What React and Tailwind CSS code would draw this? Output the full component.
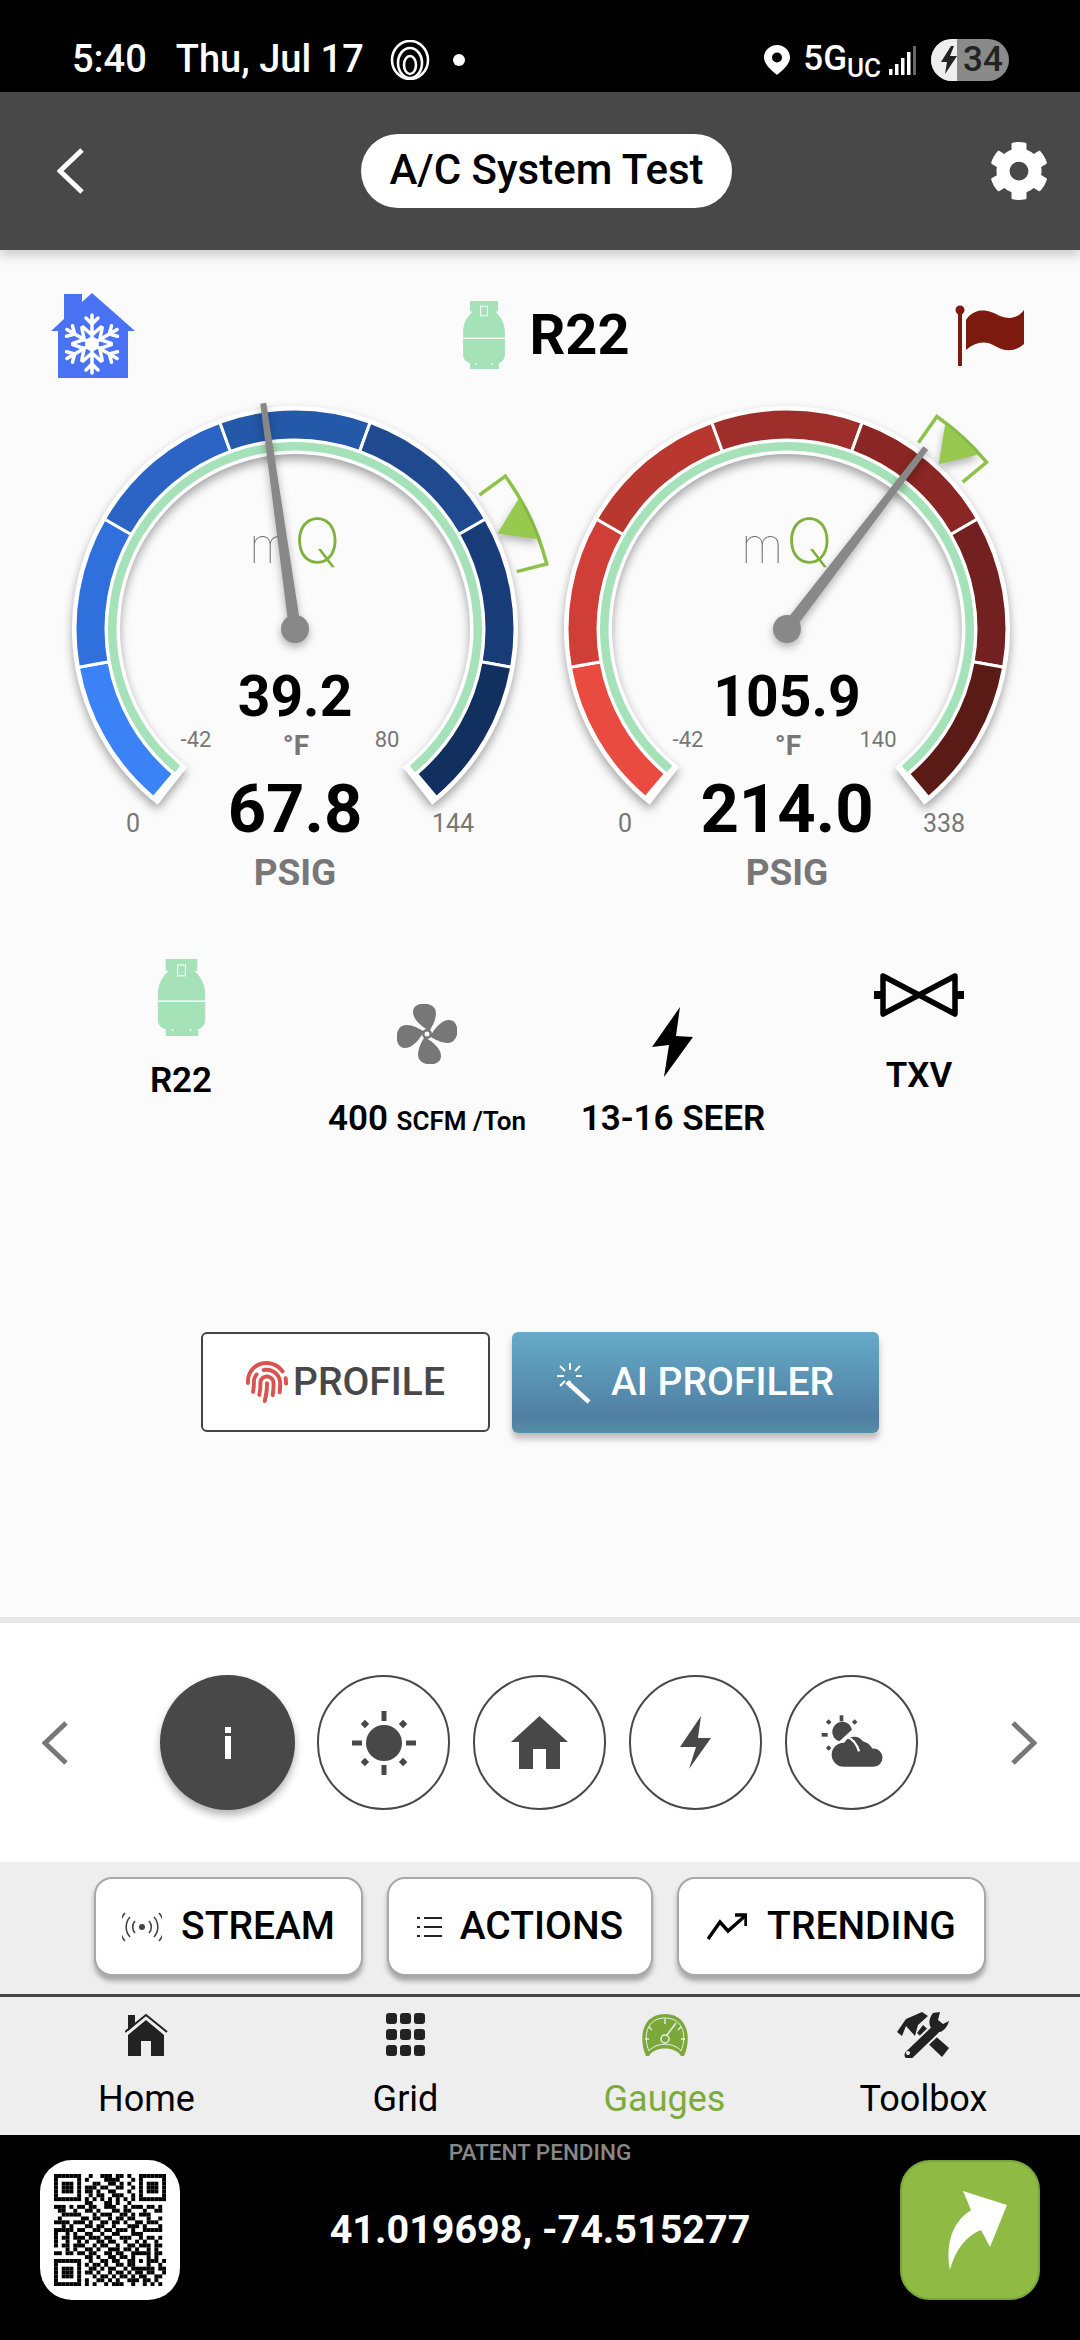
import { FaCog, FaFingerprint } from "react-icons/fa";

const polar = (r, deg) => {
  const a = (deg * Math.PI) / 180;
  return [r * Math.sin(a), -r * Math.cos(a)];
};

const ring = (r1, r2, a1, a2) => {
  const [x1, y1] = polar(r2, a1);
  const [x2, y2] = polar(r2, a2);
  const [x3, y3] = polar(r1, a2);
  const [x4, y4] = polar(r1, a1);
  const big = a2 - a1 > 180 ? 1 : 0;
  return `M${x1} ${y1}A${r2} ${r2} 0 ${big} 1 ${x2} ${y2}L${x3} ${y3}A${r1} ${r1} 0 ${big} 0 ${x4} ${y4}Z`;
};

function Gauge({ colors, needle, marker, temp, tempMax, pressure, pressureMax, labels }) {
  const [tx, ty] = polar(228, needle);
  const [nx, ny] = polar(1, needle + 90);
  const needlePts = `${nx * 6} ${ny * 6} ${tx + nx * 3} ${ty + ny * 3} ${tx - nx * 3} ${ty - ny * 3} ${-nx * 6} ${-ny * 6}`;
  const [m0, m1] = marker;
  const mid = (m0 + m1) / 2;
  const b1 = polar(228, m0);
  const b2 = polar(260, m0);
  const b3 = polar(260, m1);
  const b4 = polar(229, m1);
  const s0 = polar(224, mid);
  const s1 = polar(259, mid - 5);
  const s2 = polar(259, mid + 5);

  return (
    <svg width="492" height="520" viewBox="-246 -249 492 520" className="overflow-visible shrink-0">
      <g className="drop-shadow-[0_5px_5px_rgba(0,0,0,0.35)]">
        <path d={ring(175, 223, -142, 142)} fill="#fff" />
      </g>
      {colors.map((c, i) => (
        <path key={c} d={ring(189, 220, -140 + i * 40, -100 + i * 40)} fill={c} stroke="#fff" strokeWidth="3" />
      ))}
      <path d={ring(178.5, 187, -140, 140)} fill="#a5e2b9" />

      <text x="-46" y="-66" fontSize="49" fontWeight="100" fill="#777" className="font-['Inter']">m</text>
      <text x="-1" y="-66" fontSize="62" fontWeight="200" fill="#7fb23c" className="font-['Inter']">Q</text>

      <path d={`M${b1[0]} ${b1[1]}L${b2[0]} ${b2[1]}A260 260 0 0 1 ${b3[0]} ${b3[1]}L${b4[0]} ${b4[1]}`} fill="none" stroke="#8fc24a" strokeWidth="3.5" />
      <g className="drop-shadow-[0_4px_4px_rgba(0,0,0,0.3)]">
        <path d={`M${s0[0]} ${s0[1]}L${s1[0]} ${s1[1]}A259 259 0 0 1 ${s2[0]} ${s2[1]}Z`} fill="#97c94f" />
      </g>

      <g className="drop-shadow-[0_4px_4px_rgba(0,0,0,0.3)]">
        <polygon points={needlePts} fill="#888" />
        <circle r="14" fill="#888" />
      </g>

      <text x="0" y="87" textAnchor="middle" className="text-[57px] font-bold fill-black">{temp}</text>
      <text x="1" y="126" textAnchor="middle" className="text-[28px] font-bold fill-[#777]">°F</text>
      <text x="-99" y="118" textAnchor="middle" className="text-[22px] fill-[#777]">-42</text>
      <text x={labels[0]} y="118" textAnchor="middle" className="text-[22px] fill-[#777]">{tempMax}</text>
      <text x="0" y="203" textAnchor="middle" className="text-[67px] font-bold fill-black">{pressure}</text>
      <text x="-162" y="203" textAnchor="middle" className="text-[25px] fill-[#777]">0</text>
      <text x={labels[1]} y="203" textAnchor="middle" className="text-[25px] fill-[#777]">{pressureMax}</text>
      <text x="0" y="256" textAnchor="middle" className="text-[37px] font-bold fill-[#777]">PSIG</text>
    </svg>
  );
}

function Cylinder({ width, height }) {
  return (
    <svg width={width} height={height} viewBox="0 0 48 78">
      <path
        d="M8 0H40V12H37C42 17 48 24 48 36V62C48 66 45 70 41 71V78H8V71C3 70 0 66 0 62V36C0 24 6 17 11 12H8Z"
        fill="#a5e2b7"
      />
      <rect x="0" y="42" width="48" height="1.5" fill="#fbfbfb" />
      <rect x="20" y="6" width="8" height="11" fill="none" stroke="#fbfbfb" strokeWidth="1.2" />
      <circle cx="15" cy="72" r="1" fill="#fbfbfb" />
      <circle cx="33" cy="72" r="1" fill="#fbfbfb" />
    </svg>
  );
}

function SnowHouse() {
  return (
    <svg width="86" height="88" viewBox="50 290 86 88">
      <path d="M64 293H82V301L92 292L135 330H128V377H58V330H51L64 318Z" fill="#4a72f5" />
      <g transform="translate(92 343)" stroke="#fff" strokeWidth="3.5" strokeLinecap="round" fill="none">
        {[0, 60, 120, 180, 240, 300].map((a) => (
          <g key={a} transform={`rotate(${a})`}>
            <path d="M0 0V-29M-6 -26L0 -20L6 -26M-9 -17L0 -9L9 -17" />
          </g>
        ))}
        <circle r="7" fill="#fff" stroke="none" />
      </g>
    </svg>
  );
}

function Flag() {
  return (
    <svg width="70" height="62" viewBox="955 304 70 62">
      <rect x="958" y="308" width="4" height="58" fill="#7d1a10" />
      <circle cx="960" cy="310" r="4.5" fill="#7d1a10" />
      <path d="M966 320C975 306 990 310 1000 316C1010 320 1018 318 1024 310V344C1015 352 1005 352 995 346C985 340 975 342 966 350Z" fill="#7d1a10" />
    </svg>
  );
}

function Fan() {
  return (
    <svg width="60" height="60" viewBox="-30 -30 60 60">
      {[0, 90, 180, 270].map((a) => (
        <path key={a} transform={`rotate(${a})`} d="M1 -4C-8 -9 -17 -18 -13 -26C-9 -32 4 -32 8 -25C11 -18 6 -9 3 -4Z" fill="#777" />
      ))}
      <circle r="5" fill="#777" />
      <circle r="2.5" fill="#fbfbfb" />
    </svg>
  );
}

function Txv() {
  return (
    <svg width="90" height="46" viewBox="875 972 90 46">
      <path d="M884 976L956 1014V976L884 1014Z" fill="none" stroke="#000" strokeWidth="5.5" strokeLinejoin="round" />
      <rect x="875" y="991" width="9" height="8" fill="#000" />
      <rect x="956" y="991" width="9" height="8" fill="#000" />
    </svg>
  );
}

const QR_ROWS = [
  "11111110010011101101001111111",
  "10000010100001111000101000001",
  "10111010001100110101001011101",
  "10111010111011001100101011101",
  "10111010110100110001001011101",
  "10000010010110011100101000001",
  "11111110101010101010101111111",
  "00000000110001101001000000000",
  "11101011011001110010111011010",
  "01100100110100011011000100110",
  "00111110001011100110101110000",
  "01000001101100101101100010010",
  "11110111010011011010011011100",
  "00101000110110010001110100010",
  "11111011001101101110100111110",
  "10010100110010011000111000000",
  "10110111011101100111001011010",
  "10010010100110110010010100100",
  "10110111001011001001101110110",
  "00010100110100111011010010100",
  "11011011011001101100111110110",
  "00000000110100110110100010100",
  "11111110010011011001101011101",
  "10000010101101001101100010010",
  "10111010011010110010111111011",
  "10111010110100101101011011001",
  "10111010001011010110101100110",
  "10000010100110101001110110100",
  "11111110101001011100100101010",
];

function QrCode() {
  return (
    <svg width="112" height="112" viewBox="0 0 29 29">
      {QR_ROWS.map((row, y) =>
        row.split("").map((c, x) => (c === "1" ? <rect key={`${x}-${y}`} x={x} y={y} width="1.02" height="1.02" fill="#000" /> : null))
      )}
    </svg>
  );
}

function Chevron({ dir, color, w, h, sw }) {
  const d = dir === "left" ? `M${w - 2} 2L3 ${h / 2}L${w - 2} ${h - 2}` : `M2 2L${w - 3} ${h / 2}L2 ${h - 2}`;
  return (
    <svg width={w} height={h} viewBox={`0 0 ${w} ${h}`} className="shrink-0">
      <path d={d} fill="none" stroke={color} strokeWidth={sw} />
    </svg>
  );
}

function NavItem({ label, active, children }) {
  return (
    <div className="flex-1 flex flex-col items-center">
      <div className="h-[47px] flex items-center justify-center">{children}</div>
      <span className={`text-[36px] leading-[44px] mt-[19px] ${active ? "text-[#7cab3c]" : "text-black"}`}>{label}</span>
    </div>
  );
}

function Chip({ width, children }) {
  return (
    <div
      className="h-[99px] bg-white rounded-[18px] border-2 border-[#a8a8a8] shadow-[0_5px_5px_rgba(0,0,0,0.3)] flex items-center justify-center text-[39px] font-medium text-black"
      style={{ width }}
    >
      {children}
    </div>
  );
}

export default function App() {
  return (
    <div className="w-[1080px] h-[2340px] overflow-hidden bg-[#fbfbfb] font-['Roboto',sans-serif]">
      {/* status bar */}
      <div className="h-[92px] bg-black flex items-center justify-between pl-[72px] pr-[71px] pt-[27px] text-white">
        <div className="flex items-center text-[38px] font-medium">
          <span>5:40</span>
          <span className="ml-[29px]">Thu, Jul 17</span>
          <svg width="40" height="40" viewBox="0 0 40 40" className="ml-[26px]" fill="none" stroke="#fff" strokeWidth="2.6">
            <ellipse cx="20" cy="20" rx="18" ry="19" />
            <ellipse cx="20" cy="23" rx="12" ry="15" />
            <ellipse cx="20" cy="25" rx="6" ry="9" />
          </svg>
          <span className="w-[12px] h-[12px] rounded-full bg-white ml-[23px]" />
        </div>
        <div className="flex items-center">
          <svg width="26" height="30" viewBox="0 0 26 30">
            <path d="M13 0C5.8 0 0 5.6 0 12.6C0 21 13 30 13 30S26 21 26 12.6C26 5.6 20.2 0 13 0ZM13 17.5A5 5 0 1 1 13 7.5A5 5 0 0 1 13 17.5Z" fill="#fff" />
          </svg>
          <span className="text-[35px] font-medium ml-[13px]">5G</span>
          <span className="text-[26px] font-medium self-end leading-[36px]">UC</span>
          <svg width="28" height="30" viewBox="0 0 28 30" className="ml-[8px]">
            <rect x="0" y="24" width="3.5" height="6" fill="#fff" />
            <rect x="6" y="19" width="3.5" height="11" fill="#fff" />
            <rect x="12" y="13" width="3.5" height="17" fill="#fff" />
            <rect x="18" y="7" width="3.5" height="23" fill="#fff" />
            <rect x="24" y="1" width="3" height="29" fill="#666" />
          </svg>
          <div className="relative w-[78px] h-[42px] rounded-full overflow-hidden ml-[14px] flex bg-[#8a8a8a]">
            <div className="w-[26px] bg-[#eeeeee] flex items-center justify-end">
              <svg width="16" height="28" viewBox="0 0 16 28">
                <path d="M10 0L0 16H6L4 28L16 10H9L13 0Z" fill="#222" />
              </svg>
            </div>
            <span className="text-[35px] font-medium text-[#222] leading-[42px] ml-[6px]">34</span>
          </div>
        </div>
      </div>

      {/* header */}
      <div className="relative z-10 h-[158px] bg-[#484848] flex items-center pl-[57px] shadow-[0_6px_10px_rgba(0,0,0,0.18)]">
        <Chevron dir="left" color="#fff" w={27} h={46} sw={5} />
        <div className="ml-[277px] h-[74px] w-[371px] rounded-full bg-white flex items-center justify-center pb-[3px] text-[42px] font-medium text-black">A/C System Test</div>
        <FaCog size={60} color="#fff" className="ml-[257px]" />
      </div>

      {/* main */}
      <div className="h-[1367px]">
        <div className="flex items-center justify-between pl-[50px] pr-[55px] pt-[42px] h-[127px]">
          <SnowHouse />
          <div className="flex items-center gap-[22px]">
            <Cylinder width={46} height={68} />
            <span className="text-[56px] font-bold text-black">R22</span>
          </div>
          <Flag />
        </div>

        <div className="flex pl-[49px] mt-[3px]">
          <Gauge
            colors={["#3b82f6", "#2f70dc", "#2b64c4", "#2458a8", "#1f4a90", "#173c78", "#12305f"]}
            needle={-8}
            marker={[54, 75.5]}
            temp="39.2"
            tempMax="80"
            pressure="67.8"
            pressureMax="144"
            labels={[92, 158]}
          />
          <Gauge
            colors={["#e94b40", "#cf3f37", "#b83830", "#9e2e2a", "#8a2623", "#722020", "#5a1a16"]}
            needle={37.5}
            marker={[35.2, 50.1]}
            temp="105.9"
            tempMax="140"
            pressure="214.0"
            pressureMax="338"
            labels={[91, 157]}
          />
        </div>

        <div className="grid grid-cols-[repeat(4,246px)] pl-[58px] h-[432px] font-semibold text-black text-[35px] leading-[40px]">
          <div className="flex flex-col items-center pt-[59px]">
            <Cylinder width={49} height={77} />
            <span className="mt-[25px]">R22</span>
          </div>
          <div className="flex flex-col items-center pt-[104px]">
            <Fan />
            <span className="mt-[35px] whitespace-nowrap">
              400 <span className="text-[26px]">SCFM /Ton</span>
            </span>
          </div>
          <div className="flex flex-col items-center pt-[107px]">
            <svg width="42" height="70" viewBox="653 1007 42 70">
              <polygon points="681,1007 653,1047 670,1045 665,1077 694,1037 677,1036" fill="#000" />
            </svg>
            <span className="mt-[22px] whitespace-nowrap">13-16 SEER</span>
          </div>
          <div className="flex flex-col items-center pt-[72px]">
            <Txv />
            <span className="mt-[38px]">TXV</span>
          </div>
        </div>

        <div className="flex pl-[201px] gap-[22px]">
          <div className="w-[289px] h-[100px] border-2 border-[#444] rounded-[6px] bg-white flex items-center pl-[43px] text-[39px] font-medium text-[#484848]">
            <FaFingerprint size={42} color="#d9534f" />
            <span className="ml-[5px]">PROFILE</span>
          </div>
          <div className="w-[367px] h-[101px] rounded-[6px] bg-gradient-to-b from-[#66abc8] via-[#4f7fa3] via-85% to-[#5690a5] shadow-[0_6px_6px_rgba(0,0,0,0.25)] flex items-center pl-[40px] text-[39px] font-medium text-white">
            <svg width="42" height="42" viewBox="552 1361 42 42" stroke="#fff" strokeWidth="2" fill="none">
              <path d="M567 1381L589 1401" strokeWidth="4.5" />
              <path d="M570 1362V1369M570 1380V1387M557 1375H564M576 1375H582M560 1365L565 1370M580 1365L575 1370M560 1385L565 1380" />
            </svg>
            <span className="ml-[17px]">AI PROFILER</span>
          </div>
        </div>
      </div>

      {/* icon carousel */}
      <div className="h-[6px] bg-[#e8e8e8]" />
      <div className="h-[239px] bg-white flex items-center pl-[42px]">
        <Chevron dir="left" color="#777" w={26} h={44} sw={5} />
        <div className="ml-[92px] w-[135px] h-[135px] rounded-full bg-[#484848] shadow-[0_5px_8px_rgba(0,0,0,0.3)] flex flex-col items-center justify-center gap-[3px]">
          <span className="w-[6px] h-[6px] bg-white" />
          <span className="w-[6px] h-[23px] bg-white" />
        </div>
        <div className="ml-[22px] w-[133px] h-[135px] rounded-full border-2 border-[#484848] flex items-center justify-center">
          <svg width="68" height="68" viewBox="-34 -34 68 68" fill="#484848">
            <circle r="18" />
            <rect x="-2.5" y="-32" width="5" height="10" />
            <rect x="-2.5" y="22" width="5" height="10" />
            <rect x="-32" y="-2.5" width="10" height="5" />
            <rect x="22" y="-2.5" width="10" height="5" />
            {[45, 135, 225, 315].map((a) => (
              <rect key={a} x="-3" y="-30" width="6" height="6" transform={`rotate(${a})`} />
            ))}
          </svg>
        </div>
        <div className="ml-[23px] w-[133px] h-[135px] rounded-full border-2 border-[#484848] flex items-center justify-center">
          <svg width="58" height="54" viewBox="512 1716 58 54">
            <path d="M540.5 1716L569 1742H561V1769H547V1749H534V1769H520V1742H512Z" fill="#484848" />
          </svg>
        </div>
        <div className="ml-[23px] w-[133px] h-[135px] rounded-full border-2 border-[#484848] flex items-center justify-center">
          <svg width="32" height="53" viewBox="681 1716 32 53">
            <polygon points="702,1716 681,1747 697,1747 690,1769 712,1738 699,1738" fill="#484848" />
          </svg>
        </div>
        <div className="ml-[23px] w-[133px] h-[135px] rounded-full border-2 border-[#484848] flex items-center justify-center">
          <svg width="70" height="60" viewBox="560 40 210 180" fill="#484848">
            <path d="M627 125A30 30 0 1 1 665 90Z" />
            <rect x="628" y="47" width="11" height="18" />
            <rect x="574" y="100" width="18" height="11" />
            <rect x="589" y="61" width="12" height="12" transform="rotate(45 595 67)" />
            <rect x="667" y="61" width="12" height="12" transform="rotate(45 673 67)" />
            <rect x="589" y="139" width="12" height="12" transform="rotate(45 595 145)" />
            <g stroke="#fff" strokeWidth="7">
              <path d="M640 126A36 36 0 0 1 700 122A44 44 0 0 1 728 143A30 30 0 0 1 730 205H640A38 38 0 0 1 640 126Z" />
            </g>
            <path d="M650 112C668 118 680 135 686 155" stroke="#fff" strokeWidth="7" fill="none" />
          </svg>
        </div>
        <div className="ml-[93px]">
          <Chevron dir="right" color="#777" w={26} h={44} sw={5} />
        </div>
      </div>

      {/* action chips */}
      <div className="h-[132px] bg-[#eeeeee] flex gap-[24px] pl-[94px] pt-[15px]">
        <Chip width={269}>
          <svg width="40" height="30" viewBox="-20 -15 40 30" fill="none" stroke="#444" strokeWidth="1.6" className="mr-[19px]">
            <circle r="3" fill="#444" stroke="none" />
            <path d="M-7 -6A9 9 0 0 0 -7 6M7 -6A9 9 0 0 1 7 6M-12 -10A15 15 0 0 0 -12 10M12 -10A15 15 0 0 1 12 10M-17 -14A21 21 0 0 0 -17 14M17 -14A21 21 0 0 1 17 14" />
          </svg>
          STREAM
        </Chip>
        <Chip width={266}>
          <svg width="25" height="22" viewBox="0 0 25 22" stroke="#222" strokeWidth="1.8" className="mr-[18px]">
            <path d="M0 2H3M0 11H3M0 20H3" />
            <path d="M7 2H25M7 11H25M7 20H25" />
          </svg>
          ACTIONS
        </Chip>
        <Chip width={309}>
          <svg width="40" height="27" viewBox="0 0 40 27" fill="none" stroke="#000" strokeWidth="3.4" className="mr-[20px]">
            <path d="M1 26L13 9L21 18L38 3" />
            <path d="M28 2H39V13" />
          </svg>
          TRENDING
        </Chip>
      </div>

      {/* tab bar */}
      <div className="h-[3px] bg-[#444]" />
      <div className="h-[138px] bg-[#eeeeee] flex pl-[17px] pr-[27px] pt-[14px]">
        <NavItem label="Home">
          <svg width="43" height="44" viewBox="125 2012 43 44">
            <path d="M125 2031L146 2014L167 2031" fill="none" stroke="#222" strokeWidth="2" />
            <path d="M128 2014H135V2024L128 2030Z" fill="#222" />
            <path d="M146 2019L164 2034V2055H151V2040H141V2055H128V2034Z" fill="#222" />
          </svg>
        </NavItem>
        <NavItem label="Grid">
          <svg width="39" height="43" viewBox="0 0 39 43" fill="#222">
            {[0, 16, 32].map((y) =>
              [0, 14, 28].map((x) => <rect key={`${x}-${y}`} x={x} y={y} width="11" height="11" rx="3" />)
            )}
          </svg>
        </NavItem>
        <NavItem active label="Gauges">
          <svg width="50" height="44" viewBox="0 0 50 44">
            <path d="M6 43C-2 25 2 1 25 1C48 1 52 25 44 43H41C36 33 14 33 9 43Z" fill="#7aa93a" />
            <path d="M9 38C3 24 6 5 25 5C44 5 47 24 41 38C34 29 16 29 9 38Z" fill="none" stroke="#eee" strokeWidth="1" />
            <path d="M25 6V11M9 14L12 17M41 14L38 17M5 26H9M45 26H41" stroke="#eee" strokeWidth="1.4" />
            <path d="M27 22L36 10" stroke="#eee" strokeWidth="1.4" />
            <circle cx="25" cy="26" r="4" fill="none" stroke="#eee" strokeWidth="1.4" />
          </svg>
        </NavItem>
        <NavItem label="Toolbox">
          <svg width="54" height="47" viewBox="0 0 54 47">
            <path d="M20 22L45 46L52 37L26 14Z" fill="#222" />
            <path d="M0 21L9 8L25 1L31 5L21 14L18 25L9 15L5 25Z" fill="#222" />
            <path d="M38 19L12 44" stroke="#eee" strokeWidth="13" />
            <path d="M38 19L12 44" stroke="#222" strokeWidth="9" strokeLinecap="round" />
            <path d="M36 2C31 8 31 16 37 20C43 24 50 18 52 10L46 13L41 9L43 1Z" fill="#222" />
            <circle cx="11" cy="42" r="2" fill="#eee" />
          </svg>
        </NavItem>
      </div>

      {/* footer */}
      <div className="h-[205px] bg-black pt-[9px]">
        <div className="text-center text-[22.5px] leading-[16px] font-medium text-[#888]">PATENT PENDING</div>
        <div className="flex items-center justify-between px-[40px]">
          <div className="w-[140px] h-[140px] rounded-[32px] bg-white flex items-center justify-center">
            <QrCode />
          </div>
          <span className="text-[39.5px] font-bold text-white">41.019698, -74.515277</span>
          <div className="w-[140px] h-[140px] rounded-[30px] bg-[#8fbb45] border-2 border-[#7aa53a] flex items-center justify-center">
            <svg width="60" height="80" viewBox="948 2190 60 80" className="ml-[16px]">
              <path d="M963 2191L1007 2205L990 2247L981 2230C966 2236 955 2250 950 2270C945 2245 952 2222 971 2210Z" fill="#fff" />
            </svg>
          </div>
        </div>
      </div>
    </div>
  );
}
